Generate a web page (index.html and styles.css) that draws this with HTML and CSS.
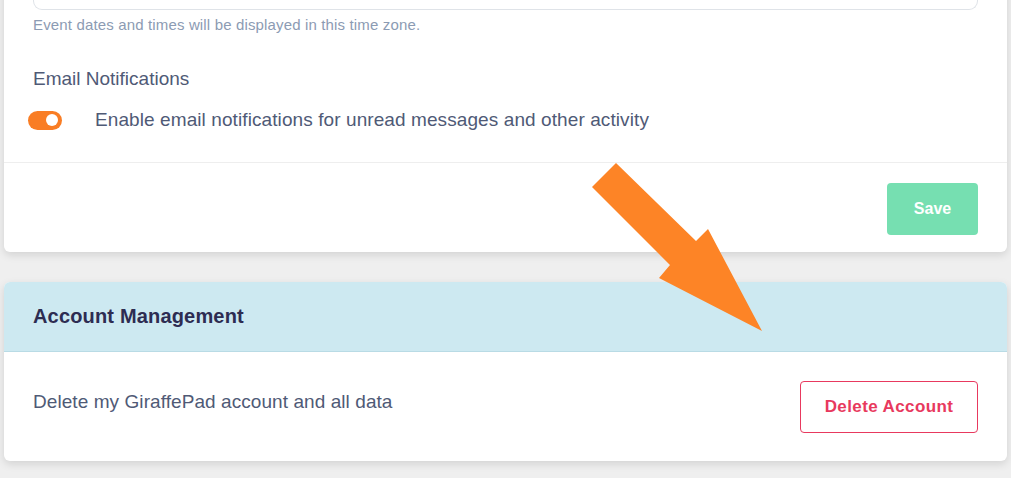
FILE: index.html
```html
<!DOCTYPE html>
<html>
<head>
<meta charset="utf-8">
<link rel="stylesheet" href="styles.css">
</head>
<body>
<div class="page">
  <section class="card card-settings">
    <div class="card-body">
      <div class="select-box"></div>
      <p class="help">Event dates and times will be displayed in this time zone.</p>
      <h3 class="field-label">Email Notifications</h3>
      <label class="toggle-row">
        <span class="toggle"><span class="knob"></span></span>
        <span class="toggle-text">Enable email notifications for unread messages and other activity</span>
      </label>
    </div>
    <div class="card-footer">
      <button class="btn btn-save">Save</button>
    </div>
  </section>

  <section class="card card-account">
    <div class="card-header">
      <h2 class="card-title">Account Management</h2>
    </div>
    <div class="account-row">
      <span class="account-text">Delete my GiraffePad account and all data</span>
      <button class="btn btn-delete">Delete Account</button>
    </div>
  </section>
</div>
<svg class="arrow" width="1011" height="478" viewBox="0 0 1011 478">
  <polygon points="616,163 592,187 670,265 659,278 762,331 708,229 696,241" fill="#fd8426"/>
</svg>
</body>
</html>
```
FILE: styles.css
```css
html, body {
  margin: 0;
  padding: 0;
  background: #efefef;
  font-family: "Liberation Sans", Arial, sans-serif;
  overflow: hidden;
  height: 478px;
}
.page {
  padding: 0 4px 0 4px;
  width: 1003px;
}
.card {
  background: #fff;
  border-radius: 6px;
  box-shadow: 0 3px 8px rgba(0,0,0,0.12);
  overflow: hidden;
}
.card-settings {
  margin-top: -40px;
  border-top-left-radius: 0;
  border-top-right-radius: 0;
}
.card-body {
  padding: 0 29px 0 29px;
  border-bottom: 1px solid #eeeeee;
  height: 203px;
  box-sizing: border-box;
}
.select-box {
  height: 50px;
  border: 1px solid #dfe3e8;
  border-top: none;
  border-radius: 0 0 9px 9px;
  box-sizing: border-box;
}
.help {
  margin: 5px 0 0 0;
  font-size: 15px;
  line-height: 20px;
  letter-spacing: 0.15px;
  color: #8c9bb3;
}
.field-label {
  margin: 34px 0 0 0;
  font-size: 19px;
  line-height: 20px;
  font-weight: normal;
  color: #4f5a76;
}
.toggle-row {
  display: flex;
  align-items: center;
  margin-top: 20px;
  margin-left: -5px;
}
.toggle {
  width: 34px;
  height: 19px;
  border-radius: 10px;
  background: #f97d24;
  display: flex;
  align-items: center;
  justify-content: flex-end;
  padding-right: 4px;
  box-sizing: border-box;
}
.knob {
  width: 12px;
  height: 12px;
  border-radius: 50%;
  background: #fff;
}
.toggle-text {
  margin-left: 33px;
  font-size: 19px;
  line-height: 22px;
  letter-spacing: 0.09px;
  color: #4f5a76;
}
.card-footer {
  display: flex;
  justify-content: flex-end;
  padding: 20px 29px 17px 29px;
}
.btn {
  font-family: "Liberation Sans", Arial, sans-serif;
  font-weight: bold;
  font-size: 16px;
  cursor: pointer;
}
.btn-save {
  width: 91px;
  height: 52px;
  background: #76dfb1;
  color: #fff;
  border: none;
  border-radius: 4px;
}
.card-account {
  margin-top: 30px;
}
.card-header {
  height: 70px;
  background: #cde9f1;
  border-bottom: 1px solid #b9dbe5;
  box-sizing: border-box;
  display: flex;
  align-items: center;
  padding: 0 29px;
}
.card-title {
  margin: 0;
  font-size: 20px;
  font-weight: bold;
  letter-spacing: 0.17px;
  color: #2d2c52;
}
.account-row {
  height: 109px;
  display: flex;
  align-items: center;
  justify-content: space-between;
  padding: 0 29px;
}
.account-text {
  font-size: 19px;
  letter-spacing: 0.07px;
  color: #4f5a76;
  margin-top: -9px;
}
.btn-delete {
  width: 178px;
  height: 52px;
  background: #fff;
  border: 1px solid #e8395e;
  border-radius: 4px;
  color: #e8395e;
  font-size: 17px;
  letter-spacing: 0.4px;
}
.arrow {
  position: absolute;
  left: 0;
  top: 0;
  pointer-events: none;
}
```
